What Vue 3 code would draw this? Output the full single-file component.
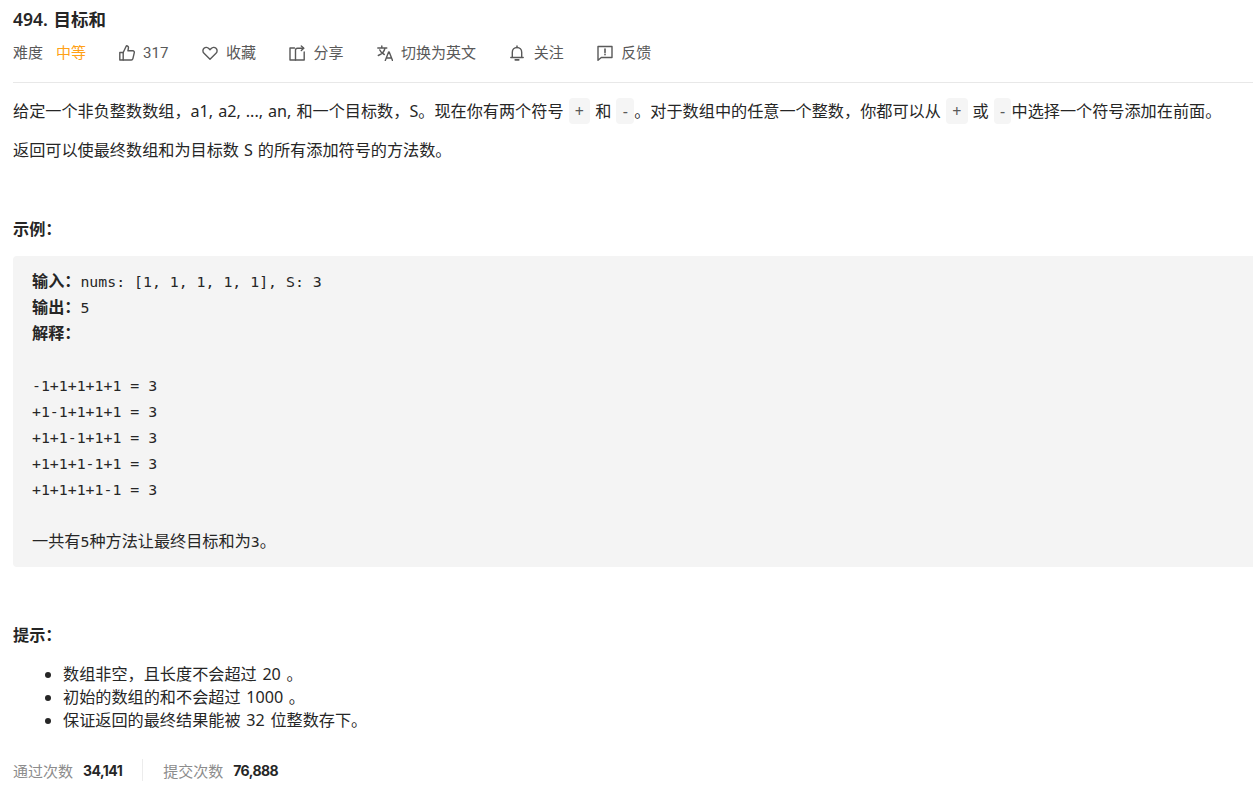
<script setup>
const metaItems = [
  { key: 'like', text: '317' },
  { key: 'heart', text: '收藏' },
  { key: 'share', text: '分享' },
  { key: 'translate', text: '切换为英文' },
  { key: 'bell', text: '关注' },
  { key: 'flag', text: '反馈' },
]
const equations = ['-1+1+1+1+1 = 3', '+1-1+1+1+1 = 3', '+1+1-1+1+1 = 3', '+1+1+1-1+1 = 3', '+1+1+1+1-1 = 3']
</script>

<template>
  <div class="page">
    <h1 class="title">494. 目标和</h1>
    <div class="meta">
      <div class="difficulty">
        <span>难度</span>
        <span class="medium">中等</span>
      </div>
      <div v-for="item in metaItems" :key="item.key" class="meta-item">
        <svg class="icon" viewBox="0 0 16 16" fill="none" stroke="currentColor" stroke-width="1.4" stroke-linejoin="round" stroke-linecap="round">
          <template v-if="item.key === 'like'">
            <path d="M.8 7.500h3.400v7.500H.8z" />
            <path d="M4.200 7.500 7.400.8c1.500 0 2.300 1 2 2.300L8.900 5.800h4.900c1.100 0 1.700.9 1.500 1.800l-1.400 6.100c-.2.800-.8 1.300-1.600 1.300H4.200" />
          </template>
          <path v-else-if="item.key === 'heart'" d="M8 14.300 2 8.300C.5 6.800.6 4.500 2 3.200c1.400-1.200 3.600-1 4.800.3L8 4.800l1.200-1.300c1.200-1.300 3.400-1.500 4.800-.3 1.400 1.300 1.500 3.600 0 5.100z" />
          <template v-else-if="item.key === 'share'">
            <path d="M5.500 3H1v12h14.200V7" />
            <path d="M6.500 15V5.300c0-1.100.8-2 2-2h6" />
            <path d="M12.300 1l2.500 2.300-2.500 2.300" />
          </template>
          <template v-else-if="item.key === 'translate'">
            <path d="M.8 3h9M4.800 1v2M8 3c-.6 3.200-3 6-6.700 7.500M2.800 5c.8 2 2.400 3.500 4.500 4.500" />
            <path d="m8.300 15.500 3.300-8.500h.6l3.300 8.500M9.500 13h4.800" />
          </template>
          <template v-else-if="item.key === 'bell'">
            <path d="M3.300 12.300V7.200c0-2.700 2-4.700 4.700-4.700s4.700 2 4.700 4.700v5.100" />
            <path d="M1.800 12.500h12.400M8 1v1.500" />
            <path d="M6.300 14.800h3.400" stroke-width="1.800" />
          </template>
          <template v-else>
            <path d="M1 1.500h14v11H4.300L1 15.200z" />
            <path d="M8 4v3.500M8 9.300v.5" stroke-width="1.600" />
          </template>
        </svg>
        <span>{{ item.text }}</span>
      </div>
    </div>
    <div class="content">
      <p class="first">给定一个非负整数数组，a1, a2, ..., an, 和一个目标数，S。现在你有两个符号 <code>+</code> 和 <code>-</code>。对于数组中的任意一个整数，你都可以从 <code>+</code> 或 <code>-</code>中选择一个符号添加在前面。</p>
      <p>返回可以使最终数组和为目标数 S 的所有添加符号的方法数。</p>
      <p class="heading"><strong>示例：</strong></p>
      <pre class="example"><strong>输入：</strong>nums: [1, 1, 1, 1, 1], S: 3
<strong>输出：</strong>5
<strong>解释：</strong>

<template v-for="eq in equations" :key="eq">{{ eq }}
</template>
<span class="cn">一共有</span>5<span class="cn">种方法让最终目标和为</span>3<span class="cn">。</span></pre>
      <p class="heading hint"><strong>提示：</strong></p>
      <ul class="notes">
        <li>数组非空，且长度不会超过 20 。</li>
        <li>初始的数组的和不会超过 1000 。</li>
        <li>保证返回的最终结果能被 32 位整数存下。</li>
      </ul>
    </div>
    <div class="stats">
      <div class="stat">
        <span class="stat-label">通过次数</span>
        <span class="stat-value">34,141</span>
      </div>
      <div class="stat second">
        <span class="stat-label">提交次数</span>
        <span class="stat-value">76,888</span>
      </div>
    </div>
  </div>
</template>

<style>
html, body { margin: 0; background: #fff; overflow: hidden; }
</style>

<style scoped>
.page {
  width: 1240px;
  height: 795px;
  padding-left: 13px;
  overflow: hidden;
  color: #262626;
  font-family: "Noto Sans", "Noto Sans CJK SC", sans-serif;
}
.title {
  margin: 0;
  padding-top: 7px;
  height: 25px;
  line-height: 24px;
  font-size: 17.5px;
  font-weight: 600;
  word-spacing: 1px;
}
.meta {
  display: flex;
  align-items: center;
  gap: 33.2px;
  height: 42px;
  padding-bottom: 8px;
  border-bottom: 1px solid #e8e8e8;
  font-size: 15px;
  line-height: 20px;
  color: #595959;
  font-family: Roboto, "Noto Sans CJK SC", sans-serif;
}
.difficulty { display: flex; gap: 13px; margin-right: -0.6px; }
.medium { color: #ffa116; }
.meta-item { display: flex; align-items: center; gap: 8.4px; }
.icon { width: 16px; height: 16px; }
.content { font-size: 16.15px; line-height: 26px; word-spacing: 0.8px; }
p { margin: 0; }
.first { margin-top: 15px; margin-bottom: 13px; white-space: nowrap; }
code {
  display: inline-block;
  padding: 0 6.3px;
  line-height: 26px;
  background: #f5f5f5;
  border-radius: 4px;
  color: #595959;
  font-size: 16px;
  font-family: "Noto Sans", sans-serif;
}
.heading { margin-top: 53px; }
.heading strong { font-weight: 600; }
.example {
  margin: 14px 0 0;
  padding: 13px 19px 12px;
  background: #f4f4f4;
  border-radius: 4px 0 0 4px;
  font-family: "DejaVu Sans Mono", "Noto Sans CJK SC", monospace;
  font-size: 14.85px;
  line-height: 26px;
  word-spacing: 0;
}
.example strong {
  font-weight: 700;
  font-size: 16.15px;
  line-height: 1;
  font-family: "Noto Sans CJK SC", sans-serif;
}
.cn { font-size: 16.15px; line-height: 1; font-family: "Noto Sans CJK SC", sans-serif; }
.hint { margin-top: 55px; }
.notes {
  margin: 15px 0 0;
  padding-left: 50px;
  font-size: 16.15px;
  line-height: 23px;
  word-spacing: 1.5px;
}
.stats {
  display: flex;
  align-items: center;
  margin-top: 27px;
  height: 22px;
  font-size: 15px;
}
.stat { display: flex; gap: 10px; align-items: center; }
.stat.second { margin-left: 20px; padding-left: 20px; border-left: 1px solid #ececec; height: 22px; }
.stat-label { color: #8c8c8c; }
.stat-value { font-family: Inter, sans-serif; font-size: 14px; font-weight: 700; letter-spacing: -0.55px; }
</style>
